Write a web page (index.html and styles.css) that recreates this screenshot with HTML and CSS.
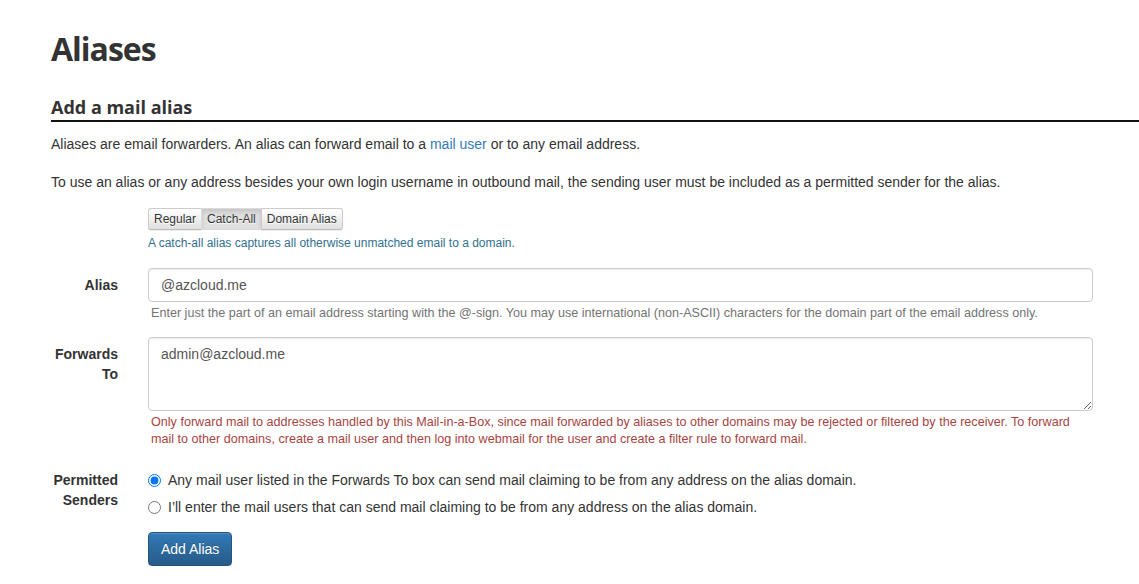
FILE: index.html
```html
<!DOCTYPE html>
<html lang="en">
<head>
<meta charset="utf-8">
<title>Aliases</title>
<link rel="stylesheet" href="styles.css">
</head>
<body>
<div class="page">
  <h1 class="title">Aliases</h1>
  <h2 class="subtitle">Add a mail alias</h2>
  <p class="intro">Aliases are email forwarders. An alias can forward email to a <a class="link" href="#">mail user</a> or to any email address.</p>
  <p class="intro last">To use an alias or any address besides your own login username in outbound mail, the sending user must be included as a permitted sender for the alias.</p>

  <form class="form">
    <div class="row">
      <div class="label"></div>
      <div class="control">
        <div class="btn-group">
          <button type="button" class="btn-xs">Regular</button>
          <button type="button" class="btn-xs active">Catch-All</button>
          <button type="button" class="btn-xs">Domain Alias</button>
        </div>
        <div class="help info">A catch-all alias captures all otherwise unmatched email to a domain.</div>
      </div>
    </div>

    <div class="row">
      <label class="label pad" for="alias">Alias</label>
      <div class="control">
        <input id="alias" class="field" type="text" value="@azcloud.me">
        <div class="help muted">Enter just the part of an email address starting with the @-sign. You may use international (non-ASCII) characters for the domain part of the email address only.</div>
      </div>
    </div>

    <div class="row forwards">
      <label class="label pad" for="targets">Forwards To</label>
      <div class="control">
        <textarea id="targets" class="field area">admin@azcloud.me</textarea>
        <div class="help danger">Only forward mail to addresses handled by this Mail-in-a-Box, since mail forwarded by aliases to other domains may be rejected or filtered by the receiver. To forward mail to other domains, create a mail user and then log into webmail for the user and create a filter rule to forward mail.</div>
      </div>
    </div>

    <div class="row senders">
      <div class="label pad">Permitted Senders</div>
      <div class="control radios">
        <label class="radio"><input type="radio" name="senders" checked> Any mail user listed in the Forwards To box can send mail claiming to be from any address on the alias domain.</label>
        <label class="radio"><input type="radio" name="senders"> I’ll enter the mail users that can send mail claiming to be from any address on the alias domain.</label>
      </div>
    </div>

    <div class="row submit">
      <div class="label"></div>
      <div class="control">
        <button type="button" class="btn-primary">Add Alias</button>
      </div>
    </div>
  </form>
</div>
</body>
</html>
```

FILE: styles.css
```css
html, body {
  margin: 0;
  padding: 0;
  background: #fff;
}
body {
  font-family: "Liberation Sans", Arial, sans-serif;
  font-size: 14px;
  line-height: 20px;
  color: #333;
  overflow: hidden;
}
.page {
  padding: 0 0 0 51px;
}
.title {
  font-family: "Open Sans", "Liberation Sans", sans-serif;
  font-weight: 700;
  font-size: 32px;
  line-height: 40px;
  margin: 29px 0 0 0;
  color: #333;
  letter-spacing: -1px;
}
.subtitle {
  font-family: "Open Sans", "Liberation Sans", sans-serif;
  font-weight: 700;
  font-size: 18px;
  line-height: 26px;
  margin: 25px 0 0 0;
  padding-bottom: 0;
  border-bottom: 2px solid #111;
  color: #333;
}
.intro {
  margin: 12px 0 18px 0;
}
.intro + .intro {
  margin-top: 0;
}
.intro.last {
  margin-bottom: 16px;
}
.link {
  color: #337ab7;
  text-decoration: none;
}
.form {
  display: flex;
  flex-direction: column;
  gap: 16px;
  margin-top: 0;
}
.row {
  display: flex;
  gap: 30px;
}
.row.forwards {
  margin-top: -1px;
}
.row.senders {
  margin-top: -1px;
}
.row.submit {
  margin-top: -1px;
}
.label {
  width: 67px;
  flex: none;
  text-align: right;
  font-weight: 700;
}
.label.pad {
  padding-top: 7px;
}
.control {
  width: 945px;
  flex: none;
}
.btn-group {
  display: inline-flex;
}
.btn-xs {
  font-family: "Liberation Sans", Arial, sans-serif;
  font-size: 12px;
  line-height: 18px;
  padding: 1px 5px;
  color: #333;
  background-image: linear-gradient(to bottom, #fff 0, #e0e0e0 100%);
  border: 1px solid #ccc;
  border-color: #ccc #ccc #bbb;
  text-shadow: 0 1px 0 #fff;
  box-shadow: inset 0 1px 0 rgba(255,255,255,.15), 0 1px 1px rgba(0,0,0,.075);
  margin: 0 0 0 -1px;
  border-radius: 0;
  cursor: pointer;
}
.btn-xs:first-child {
  margin-left: 0;
  border-radius: 3px 0 0 3px;
}
.btn-xs:last-child {
  border-radius: 0 3px 3px 0;
}
.btn-xs.active {
  background: #e0e0e0;
  border-color: #dbdbdb;
  box-shadow: inset 0 3px 5px rgba(0,0,0,.125);
}
.help {
  font-size: 12.6px;
  line-height: 17px;
  margin-top: 3px;
  padding-left: 3px;
}
.help.info {
  font-size: 12px;
  margin-top: 5px;
  padding-left: 0;
  color: #31708f;
}
.help.muted {
  color: #737373;
}
.help.danger {
  color: #a94442;
}
.field {
  display: block;
  box-sizing: border-box;
  width: 100%;
  height: 34px;
  padding: 6px 12px;
  font-family: "Liberation Sans", Arial, sans-serif;
  font-size: 14px;
  line-height: 20px;
  color: #555;
  background: #fff;
  border: 1px solid #ccc;
  border-radius: 4px;
  box-shadow: inset 0 1px 1px rgba(0,0,0,.075);
  margin: 0;
}
.area {
  height: 74px;
  resize: vertical;
}
.radios {
  display: flex;
  flex-direction: column;
  gap: 7px;
  padding-top: 7px;
}
.radio {
  display: flex;
  align-items: center;
  line-height: 20px;
  font-weight: 400;
}
.radio input {
  margin: 0 7px 0 0;
  width: 13px;
  height: 13px;
}
.btn-primary {
  font-family: "Liberation Sans", Arial, sans-serif;
  font-size: 14px;
  line-height: 20px;
  padding: 6px 12px;
  color: #fff;
  background-image: linear-gradient(to bottom, #337ab7 0, #265a88 100%);
  border: 1px solid #245580;
  border-radius: 4px;
  text-shadow: 0 -1px 0 rgba(0,0,0,.2);
  box-shadow: inset 0 1px 0 rgba(255,255,255,.15), 0 1px 1px rgba(0,0,0,.075);
  margin-top: 0;
  cursor: pointer;
}
```
